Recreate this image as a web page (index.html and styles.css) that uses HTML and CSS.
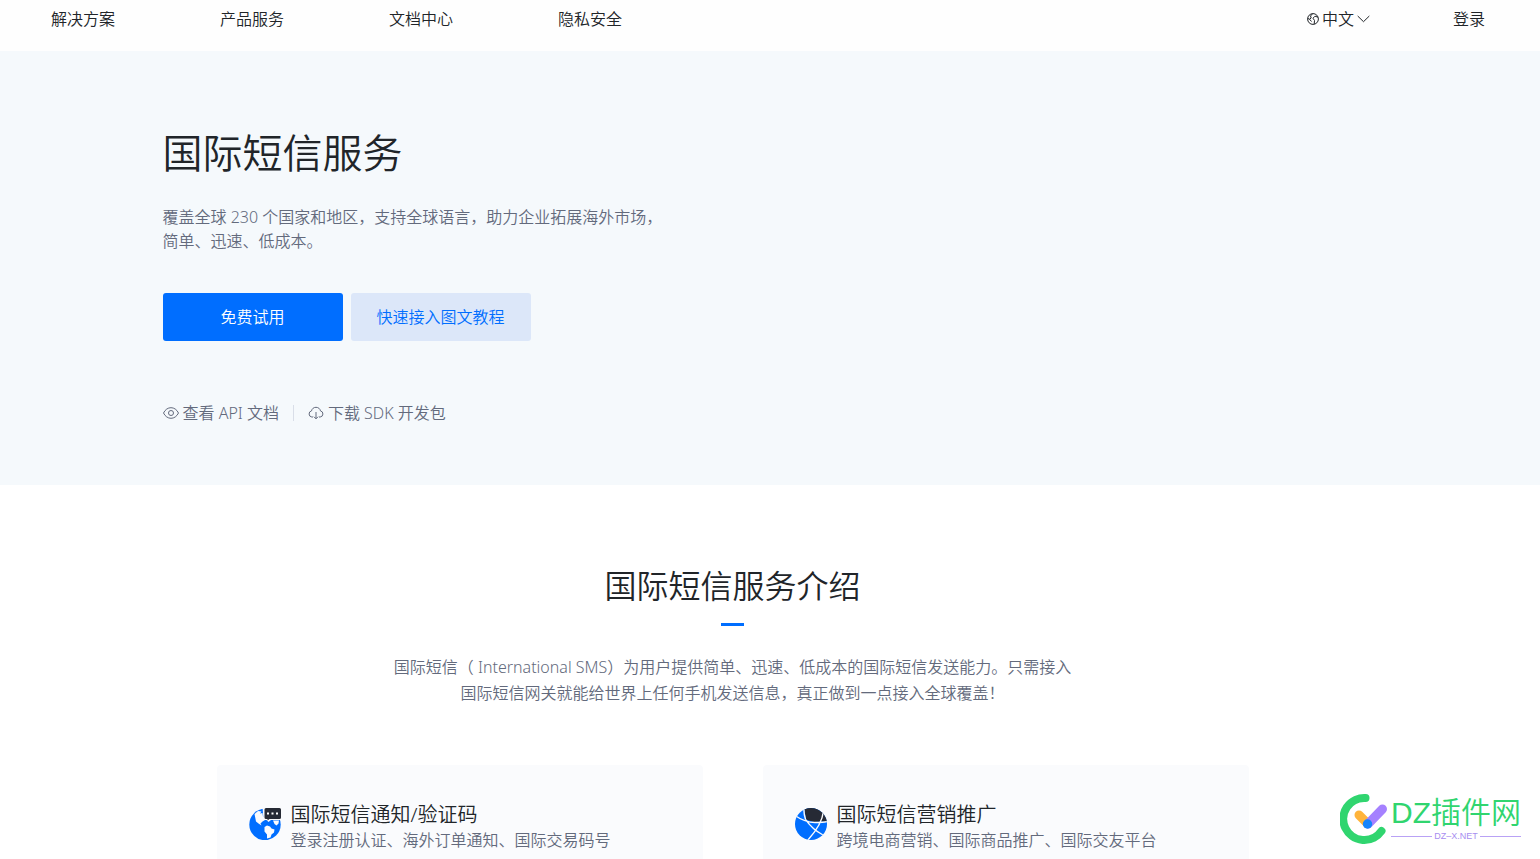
FILE: index.html
```html
<!DOCTYPE html>
<html lang="zh-CN">
<head>
<meta charset="utf-8">
<meta name="viewport" content="width=device-width, initial-scale=1">
<title>国际短信服务</title>
<link rel="stylesheet" href="styles.css">
</head>
<body>
<div class="page">
  <header class="header">
    <nav class="nav">
      <a href="#">解决方案</a>
      <a href="#">产品服务</a>
      <a href="#">文档中心</a>
      <a href="#">隐私安全</a>
    </nav>
    <div class="account">
      <button class="lang" type="button">
        <svg class="globe" viewBox="0 0 12 12" fill="none" stroke="currentColor"><circle cx="6" cy="6" r="5.4"/><path d="M5.500.8 3.500 3 4.200 5 2.500 6.200 1 5.500M11 4.200 8 3.200 6 5.200 7.500 7.500 7.200 11M2.500 6.200 4.500 8.500"/></svg>
        <span>中文</span>
        <svg class="chevron" viewBox="0 0 13 8" fill="none" stroke="currentColor"><path d="M.7 1 6.500 6.700 12.300 1"/></svg>
      </button>
      <a href="#">登录</a>
    </div>
  </header>

  <section class="hero">
    <div class="container">
      <h1>国际短信服务</h1>
      <p class="lead">覆盖全球 230 个国家和地区，支持全球语言，助力企业拓展海外市场，<br>简单、迅速、低成本。</p>
      <div class="actions">
        <button class="btn btn-primary" type="button">免费试用</button>
        <button class="btn btn-soft" type="button">快速接入图文教程</button>
      </div>
      <div class="links">
        <a href="#">
          <svg viewBox="0 0 16 16" fill="none" stroke="currentColor"><path d="M.5 8C2.300 4.500 4.900 2.700 8 2.700S13.700 4.500 15.500 8C13.700 11.500 11.100 13.300 8 13.300S2.300 11.500.5 8Z"/><circle cx="8" cy="8" r="2.500"/></svg>
          <span>查看 API 文档</span>
        </a>
        <a href="#">
          <svg viewBox="0 0 16 16" fill="none" stroke="currentColor"><path d="M5 12H3.800A3.100 3.100 0 0 1 3.500 5.900C4 3.700 5.700 2.300 8 2.300s4 1.400 4.500 3.600a3.100 3.100 0 0 1-.3 6.100H11M8 7v6.800M5.900 11.700 8 13.800l2.100-2.100"/></svg>
          <span>下载 SDK 开发包</span>
        </a>
      </div>
    </div>
  </section>

  <section class="intro">
    <h2>国际短信服务介绍</h2>
    <p class="summary">国际短信（ International SMS）为用户提供简单、迅速、低成本的国际短信发送能力。只需接入<br>国际短信网关就能给世界上任何手机发送信息，真正做到一点接入全球覆盖！</p>
    <div class="cards">
      <article class="card">
        <svg class="card-icon" viewBox="0 0 32 32">
          <circle cx="16" cy="16.500" r="15.700" fill="#006eff"/>
          <path fill="#fafbfd" d="M5.500 6 9 3 12.500 3.500 11 5.500 13.500 5 14 8.500 16 10V12L13.500 13.500 11.500 15.500 12.500 17.500 9.500 15.500 7 13.500ZM15.500 19l2.500-1.500 3 1 1.500 2 3 1-.5 3-2.500 2-1 3-3.500 1 0-4-2.500-3ZM24 12.500h6l-.5 3-2 2-2-1.500Z"/>
          <path fill="#fafbfd" d="M13.500-1H33v13H22l-2.500 2-2-2h-3Z"/>
          <path fill="#262a35" d="M17 0h13.500Q32 0 32 1.500v8q0 1.500-1.500 1.500H20.500L18.500 12.500V11H17q-1.500 0-1.500-1.500v-8Q15.500 0 17 0Z"/>
          <path fill="#fff" d="M18 4.500h2v2h-2zM22.500 4.500h2v2h-2zM27 4.500h2v2h-2z"/>
        </svg>
        <div>
          <h3>国际短信通知/验证码</h3>
          <p>登录注册认证、海外订单通知、国际交易码号</p>
        </div>
      </article>
      <article class="card">
        <svg class="card-icon" viewBox="0 0 32 32">
          <defs><clipPath id="ball"><circle cx="16" cy="16" r="16"/></clipPath></defs>
          <g clip-path="url(#ball)">
            <path fill="#006eff" d="M0 0h32v32H0z"/>
            <path fill="#262a35" d="M9-1h24v15l-6-.5-8 .5-8-2.500Z"/>
            <path fill="none" stroke="#fafbfd" stroke-width="1.400" d="M9 0Q8.500 5 10.500 11.300M0 7.500Q10 14.500 20 14.500T33 13.200M28.500 3Q27 17 12 33M10.500 11.300Q17 21 28 27"/>
          </g>
        </svg>
        <div>
          <h3>国际短信营销推广</h3>
          <p>跨境电商营销、国际商品推广、国际交友平台</p>
        </div>
      </article>
    </div>
  </section>

  <aside class="brand">
    <svg class="brand-mark" viewBox="0 0 48 52" fill="none" stroke-linecap="round">
      <path stroke="#30d56f" stroke-width="8" d="M25.500 5A21 21 0 1 0 41.500 38"/>
      <path stroke="#ffb43b" stroke-width="9" d="M19 22 27 30"/>
      <path stroke="#a581ff" stroke-width="9" d="M42.500 16 28 31"/>
      <circle cx="27.500" cy="31" r="4.700" fill="#1685fc"/>
    </svg>
    <div class="brand-text">
      <span class="brand-name">DZ插件网</span>
      <span class="brand-site">DZ–X.NET</span>
    </div>
  </aside>
</div>
</body>
</html>
```
FILE: styles.css
```css
* {
  box-sizing: border-box;
}

body {
  margin: 0;
  background: #fff;
  color: #212529;
  font-family: "Noto Sans", "Noto Sans CJK SC", sans-serif;
  font-size: 16px;
  font-weight: 350;
  line-height: 24px;
  text-spacing-trim: space-all;
}

h1,
h2,
h3,
p {
  margin: 0;
  font-weight: 350;
}

a {
  color: inherit;
  text-decoration: none;
}

button {
  border: 0;
  padding: 0;
  background: none;
  color: inherit;
  font: inherit;
}

.page {
  position: relative;
  display: flex;
  flex-direction: column;
  min-height: 100vh;
}

.header {
  display: flex;
  justify-content: space-between;
  padding: 7px 55px 20px 51px;
  background: #fefefe;
}

.nav {
  display: flex;
  gap: 105px;
}

.account {
  display: flex;
  gap: 83px;
}

.lang {
  display: flex;
  align-items: center;
  gap: 3px;
}

.globe {
  width: 12px;
  height: 12px;
}

.chevron {
  width: 13px;
  height: 8px;
}

.hero {
  padding: 72px 75px 60px 0;
  background: #f5f9fc;
}

.container {
  max-width: 1140px;
  margin: 0 auto;
}

h1 {
  font-size: 40px;
  line-height: 60px;
}

.lead {
  margin-top: 22px;
  color: #636a7c;
}

.actions {
  display: flex;
  gap: 8px;
  margin-top: 40px;
}

.btn {
  width: 180px;
  height: 48px;
  border-radius: 3px;
}

.btn-primary {
  background: #006eff;
  color: #fff;
}

.btn-soft {
  background: #dce7f9;
  color: #006eff;
}

.links {
  display: flex;
  margin-top: 60px;
  color: #636a7c;
}

.links a {
  display: flex;
  align-items: center;
  gap: 4px;
}

.links a + a::before {
  content: "";
  width: 1px;
  height: 16px;
  margin: 0 10px 0 14px;
  background: #d9dee8;
}

.links svg {
  width: 16px;
  height: 16px;
}

.intro {
  display: flex;
  flex: 1;
  flex-direction: column;
  align-items: center;
  padding: 77px 75px 0 0;
  text-align: center;
}

h2 {
  font-size: 32px;
  line-height: 48px;
}

h2::after {
  content: "";
  display: block;
  width: 23px;
  height: 3px;
  margin: 13px auto 0;
  background: #006eff;
}

.summary {
  margin-top: 28px;
  color: #636a7c;
  line-height: 26px;
}

.cards {
  display: grid;
  flex: 1;
  grid-template-columns: 1fr 1fr;
  gap: 60px;
  width: 100%;
  max-width: 1032px;
  margin-top: 59px;
  text-align: left;
}

.card {
  display: flex;
  gap: 10px;
  padding: 37px 32px 4px;
  border-radius: 4px 4px 0 0;
  background: #fafbfd;
}

.card-icon {
  flex: none;
  width: 32px;
  height: 32px;
  margin-top: 6px;
}

h3 {
  font-size: 20px;
  line-height: 26px;
}

.card p {
  color: #636a7c;
}

.brand {
  position: absolute;
  right: 19px;
  bottom: 14px;
  display: flex;
  gap: 3px;
}

.brand-mark {
  width: 48px;
  height: 52px;
}

.brand-text {
  display: flex;
  flex-direction: column;
  padding-top: 1px;
  font-family: "Liberation Sans", "Noto Sans CJK SC", sans-serif;
}

.brand-name {
  color: #30d56f;
  font-size: 30px;
  font-weight: 350;
  line-height: 38px;
}

.brand-site {
  display: flex;
  align-items: center;
  gap: 2px;
  color: #a78df0;
  font-size: 9px;
  line-height: 8px;
}

.brand-site::before,
.brand-site::after {
  content: "";
  flex: 1;
  height: 1px;
  background: #b9a2f5;
}
```
